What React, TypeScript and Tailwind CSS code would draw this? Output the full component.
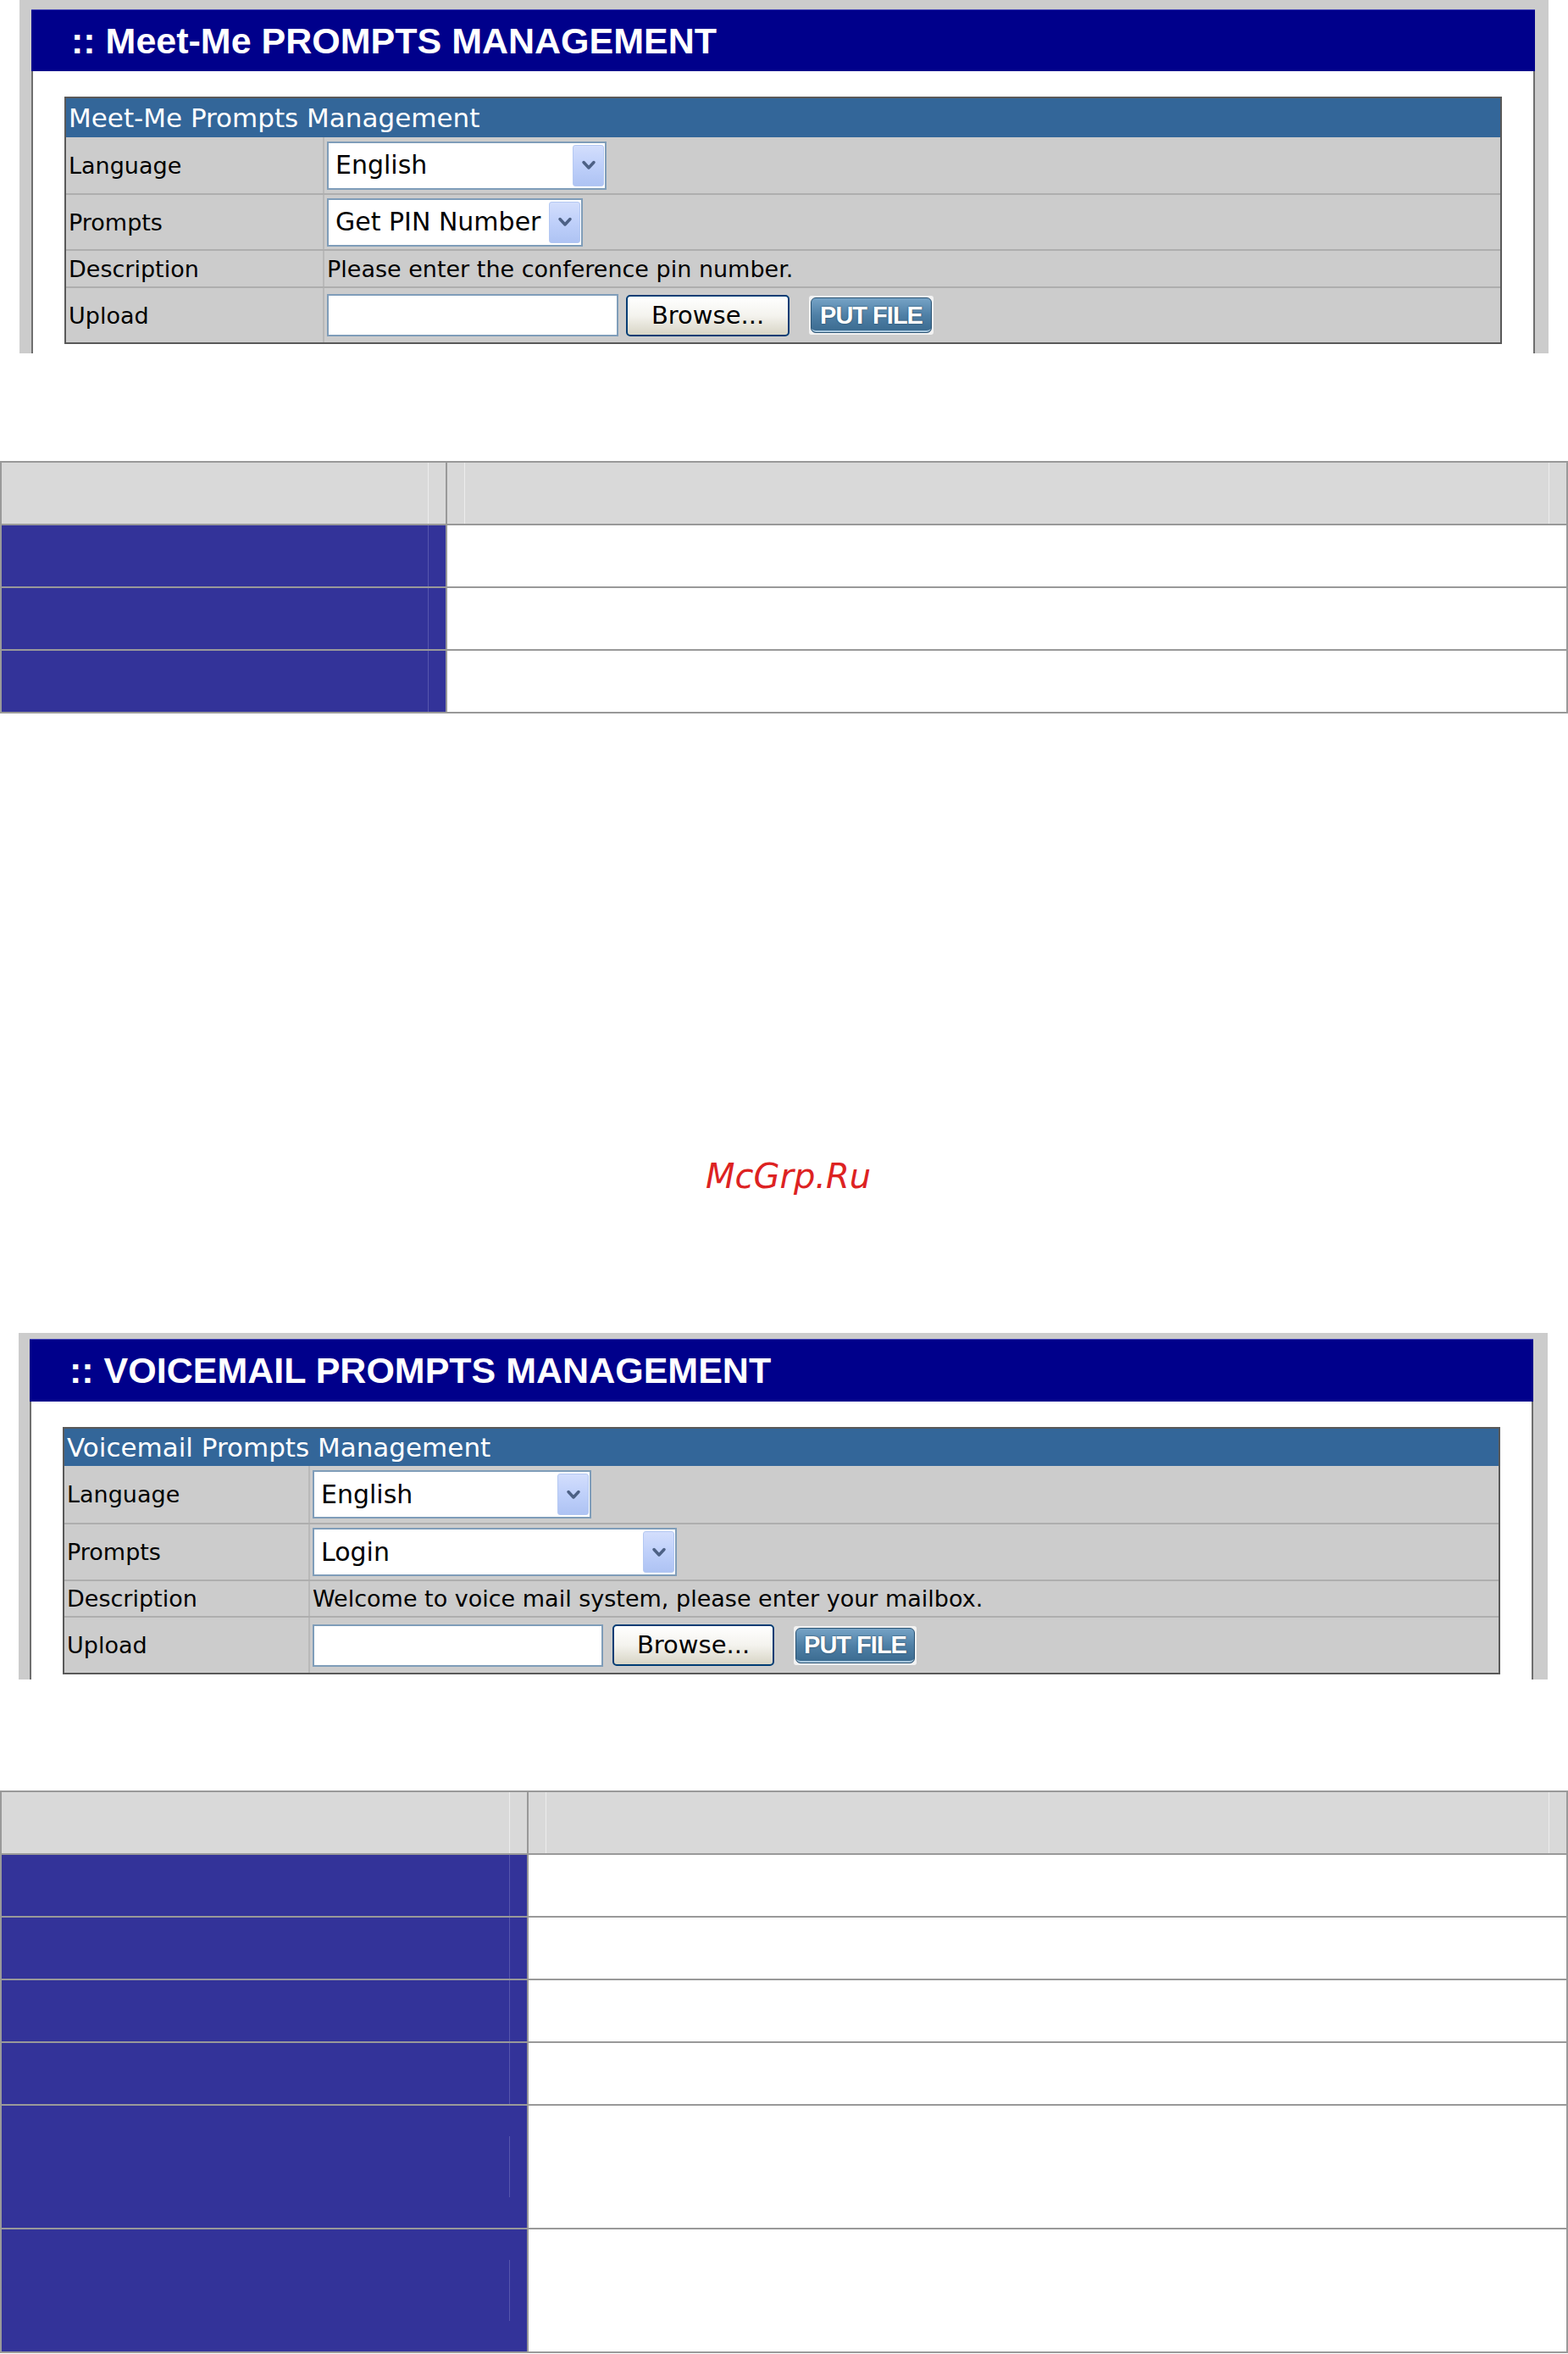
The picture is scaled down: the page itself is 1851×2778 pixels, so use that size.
import React from 'react';

const formFont = "font-['DejaVu_Sans',Verdana,sans-serif]";

function Chevron() {
    return (
        <svg width="20" height="16" viewBox="0 0 20 16">
            <path d="M4 4.5 L10 11 L16 4.5" fill="none" stroke="#4d6185" strokeWidth="3.5" strokeLinecap="round" strokeLinejoin="round" />
        </svg>
    );
}

function SelectBox({ value, className }: { value: string; className: string }) {
    return (
        <div className={`flex h-[57px] items-center justify-between border-2 border-[#7f9db9] bg-white pl-[8px] pr-[1px] ${className}`}>
            <span className="text-[30px] leading-none text-black">{value}</span>
            <span className="flex h-[49px] w-[37px] items-center justify-center rounded-[3px] border border-[#b4c8f2] bg-linear-to-b from-[#d3defc] via-[#bfd0fa] to-[#aec3f3]">
                <Chevron />
            </span>
        </div>
    );
}

interface UploadProps {
    inputW: string;
    browseW: string;
    putW: string;
    gap1: string;
}

function UploadControls({ inputW, browseW, putW, gap1 }: UploadProps) {
    return (
        <div className="flex items-center">
            <div className={`h-[50px] border-2 border-[#7f9db9] bg-white ${inputW}`} />
            <button className={`flex h-[49px] items-center justify-center rounded-[5px] border-2 border-[#003c74] bg-linear-to-b from-white via-[#f4f3ee] to-[#d8d5c6] text-[29px] leading-none text-black ${browseW} ${gap1}`}>
                Browse...
            </button>
            <div className={`ml-[23px] h-[46px] rounded-[3px] bg-[#f2f2f2] p-[2px] ${putW}`}>
                <div className="flex h-full flex-col items-center justify-center rounded-[6px] border border-[#2b5373] bg-linear-to-b from-[#76a3c6] via-[#4f80a6] to-[#3a6a8f] shadow-[inset_0_-4px_0_-2px_#a9c8de]">
                    <span className="font-['Liberation_Sans',Arial,sans-serif] text-[29px] font-bold leading-none tracking-[-1px] text-white [text-shadow:0_0_2px_#1d3a52]">
                        PUT FILE
                    </span>
                </div>
            </div>
        </div>
    );
}

interface PanelProps {
    heading: string;
    title: string;
    frame: string;
    navy: string;
    body: string;
    titleH: string;
    rowH: string;
    descH: string;
    labelW: string;
    langW: string;
    prompt: string;
    promptW: string;
    description: string;
    upload: UploadProps;
}

function PromptsPanel(p: PanelProps) {
    const rows = [
        { label: 'Language', h: p.rowH, content: <SelectBox value="English" className={p.langW} /> },
        { label: 'Prompts', h: p.rowH, content: <SelectBox value={p.prompt} className={p.promptW} /> },
        { label: 'Description', h: p.descH, content: <span className="text-[27px] leading-none text-black">{p.description}</span> },
        { label: 'Upload', h: p.rowH, content: <UploadControls {...p.upload} /> },
    ];

    return (
        <div className={`w-[1805px] bg-[#cccccc] ${p.frame}`}>
            <div className={`flex w-[1775px] items-center border-t border-[#4848b8] bg-[#00008b] pl-[47px] ${p.navy}`}>
                <h1 className="font-['Liberation_Sans',Arial,sans-serif] text-[43px] font-bold leading-none text-white">{p.heading}</h1>
            </div>
            <div className={`w-[1775px] border-x-2 border-[#6e6e6e] bg-white px-[37px] pt-[30px] ${p.body}`}>
                <div className={`border-2 border-[#595959] ${formFont}`}>
                    <div className={`flex items-center bg-[#336699] pl-[3px] text-[31px] leading-none text-white ${p.titleH}`}>{p.title}</div>
                    {rows.map((r, i) => (
                        <div key={r.label} className={`flex bg-[#cccccc] ${i > 0 ? 'border-t-2 border-[#aeaeae]' : ''} ${r.h}`}>
                            <div className={`flex items-center border-r-2 border-[#b9b9b9] pl-[3px] text-[27px] leading-none text-black ${p.labelW}`}>
                                {r.label}
                            </div>
                            <div className="flex flex-1 items-center pl-[3px]">{r.content}</div>
                        </div>
                    ))}
                </div>
            </div>
        </div>
    );
}

interface GridRow {
    h: string;
    tall: boolean;
}

function GridTable({ rows, leftW }: { rows: GridRow[]; leftW: string }) {
    return (
        <div className="border-2 border-[#999999]">
            <div className="flex h-[74px] border-b-2 border-[#999999] bg-[#d9d9d9]">
                <div className={`border-r-2 border-[#999999] pr-[20px] ${leftW}`}>
                    <div className="h-full border-r border-[#ececec]" />
                </div>
                <div className="flex-1 px-[20px]">
                    <div className="h-full border-x border-[#ececec]" />
                </div>
            </div>
            {rows.map((r, i) => (
                <div key={i} className={`flex ${r.h} ${i < rows.length - 1 ? 'border-b-2 border-[#999999]' : ''}`}>
                    <div className={`flex border-r-2 border-[#999999] bg-[#333399] pr-[20px] ${leftW}`}>
                        <div className={`w-full self-center border-r border-[#5656ad] ${r.tall ? 'h-[72px]' : 'h-full'}`} />
                    </div>
                    <div className="flex-1 bg-white" />
                </div>
            ))}
        </div>
    );
}

export default function App() {
    return (
        <div className="min-h-[2778px] w-[1851px] bg-white">
            <PromptsPanel
                heading=":: Meet-Me PROMPTS MANAGEMENT"
                title="Meet-Me Prompts Management"
                frame="ml-[23px] h-[417px] pl-[14px] pt-[11px]"
                navy="h-[73px]"
                body="h-[333px]"
                titleH="h-[46px]"
                rowH="h-[66px]"
                descH="h-[44px]"
                labelW="w-[305px]"
                langW="w-[330px]"
                prompt="Get PIN Number"
                promptW="w-[302px]"
                description="Please enter the conference pin number."
                upload={{ inputW: 'w-[344px]', browseW: 'w-[193px]', putW: 'w-[147px]', gap1: 'ml-[9px]' }}
            />

            <div className="mt-[127px]">
                <GridTable
                    leftW="w-[526px]"
                    rows={[
                        { h: 'h-[74px]', tall: false },
                        { h: 'h-[74px]', tall: false },
                        { h: 'h-[72px]', tall: false },
                    ]}
                />
            </div>

            <div className="mt-[526px] h-[40px] pl-[833px] font-['DejaVu_Sans',sans-serif] text-[40px] italic leading-[40px] text-[#dd2222]">
                McGrp.Ru
            </div>

            <div className="mt-[165px]">
                <PromptsPanel
                    heading=":: VOICEMAIL PROMPTS MANAGEMENT"
                    title="Voicemail Prompts Management"
                    frame="ml-[22px] h-[409px] pl-[13px] pt-[7px]"
                    navy="h-[74px]"
                    body="h-[328px]"
                    titleH="h-[44px]"
                    rowH="h-[67px]"
                    descH="h-[43px]"
                    labelW="w-[290px]"
                    langW="w-[329px]"
                    prompt="Login"
                    promptW="w-[430px]"
                    description="Welcome to voice mail system, please enter your mailbox."
                    upload={{ inputW: 'w-[343px]', browseW: 'w-[191px]', putW: 'w-[145px]', gap1: 'ml-[11px]' }}
                />
            </div>

            <div className="mt-[131px]">
                <GridTable
                    leftW="w-[622px]"
                    rows={[
                        { h: 'h-[74px]', tall: false },
                        { h: 'h-[74px]', tall: false },
                        { h: 'h-[74px]', tall: false },
                        { h: 'h-[74px]', tall: false },
                        { h: 'h-[146px]', tall: true },
                        { h: 'h-[144px]', tall: true },
                    ]}
                />
            </div>
        </div>
    );
}
